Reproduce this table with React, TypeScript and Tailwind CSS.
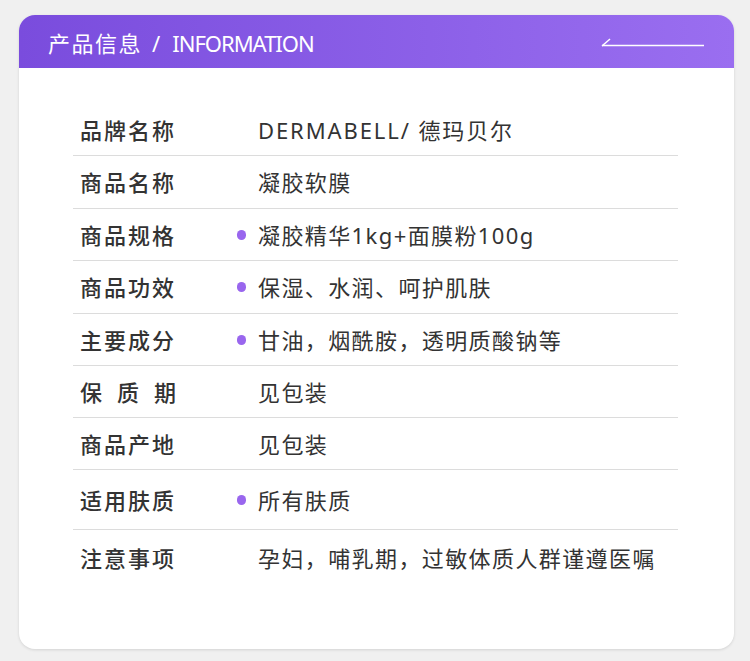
import React from "react";

const rows: { label: string; value: string; bullet?: boolean; spaced?: boolean; h: number; border: boolean }[] = [
  { label: "品牌名称", value: "DERMABELL/ 德玛贝尔", h: 52, border: true },
  { label: "商品名称", value: "凝胶软膜", h: 53, border: true },
  { label: "商品规格", value: "凝胶精华1kg+面膜粉100g", bullet: true, h: 52, border: true },
  { label: "商品功效", value: "保湿、水润、呵护肌肤", bullet: true, h: 53, border: true },
  { label: "主要成分", value: "甘油，烟酰胺，透明质酸钠等", bullet: true, h: 52, border: true },
  { label: "保质期", value: "见包装", spaced: true, h: 52, border: true },
  { label: "商品产地", value: "见包装", h: 52, border: true },
  { label: "适用肤质", value: "所有肤质", bullet: true, h: 60, border: true },
  { label: "注意事项", value: "孕妇，哺乳期，过敏体质人群谨遵医嘱", h: 55, border: false },
];

export default function App() {
  return (
    <div
      className="w-[750px] h-[661px] bg-[#f0f0f0] pt-[15px] pl-[19px]"
      style={{ fontFamily: '"Noto Sans", "Noto Sans CJK SC", sans-serif' }}
    >
      <div className="w-[715px] h-[634px] bg-white rounded-[16px] overflow-hidden shadow-[0_1px_3px_rgba(0,0,0,0.12)]">
        <div className="h-[53px] flex items-center justify-between pl-[29px] pr-[29px] pt-[3px] bg-gradient-to-r from-[#7a4cdd] to-[#9a6ef0]">
          <div className="flex items-center text-white text-[22px] leading-none">
            <span className="tracking-[1.5px]">产品信息</span>
            <span className="ml-[10px] mr-[12px]">/</span>
            <span className="tracking-[-1px]">INFORMATION</span>
          </div>
          <svg width="104" height="10" viewBox="0 0 104 10" className="mt-[-2px]">
            <path d="M1 9 L9 2" stroke="white" strokeWidth="1.5" fill="none" />
            <path d="M1 8.5 L103 8.5" stroke="white" strokeWidth="1.5" fill="none" />
          </svg>
        </div>
        <div className="pl-[54px] pr-[56px] pt-[36px]">
          {rows.map((r, i) => (
            <div
              key={i}
              className={`flex items-center pl-[7px] ${r.border ? "border-b border-[#dcdcdc]" : ""}`}
              style={{ height: r.h }}
            >
              {r.spaced ? (
                <div className="w-[96px] flex justify-between text-[22px] font-medium text-[#333] leading-none">
                  <span>保</span>
                  <span>质</span>
                  <span>期</span>
                </div>
              ) : (
                <div className="w-[96px] text-[22px] font-medium text-[#333] tracking-[2px] leading-none whitespace-nowrap">
                  {r.label}
                </div>
              )}
              <div className="w-[61px]" />
              <div className="w-[9px] flex justify-center">
                {r.bullet ? <span className="block w-[10px] h-[10px] rounded-full bg-[#9966ee]" /> : null}
              </div>
              <div
                className={`ml-[12px] text-[22px] text-[#333] leading-none whitespace-nowrap ${
                  i === 0 ? "tracking-[1.9px]" : "tracking-[1.4px]"
                }`}
              >
                {r.value}
              </div>
            </div>
          ))}
        </div>
      </div>
    </div>
  );
}
